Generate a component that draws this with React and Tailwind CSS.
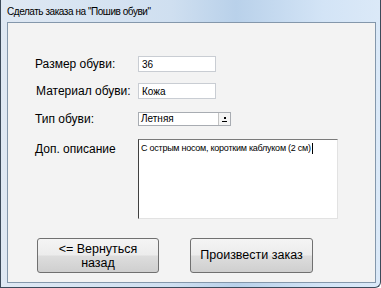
export default function App() {
  return (
    <div
      className="w-[381px] h-[288px] flex flex-col border-x border-b border-[#3c4a5a] rounded-br-[6px] bg-[linear-gradient(90deg,#dfe8f3_0%,#cfdff0_45%,#b9d1ea_62%,#d3e4f6_85%,#dbe9f8_100%)]"
      style={{ fontFamily: '"Liberation Sans", Arial, sans-serif' }}
    >
      {/* Title bar */}
      <div className="h-[22px] flex items-center pl-[6px] text-[10px] tracking-[-0.45px] whitespace-nowrap text-black">
        Сделать заказа на "Пошив обуви"
      </div>

      {/* Client area */}
      <div className="flex-1 ml-[6px] mr-[4px] mb-[4px] border border-[#8497ab] bg-[#f3f3f3] flex flex-col text-black whitespace-nowrap">
        <div className="flex items-center h-[16px] mt-[33px] pl-[27px]">
          <span className="w-[103px] text-[12px]">Размер обуви:</span>
          <div className="w-[78px] h-[16px] bg-white border border-[#c9cdd3] text-[10px] pl-[3px] flex items-center">36</div>
        </div>

        <div className="flex items-center h-[16px] mt-[11px] pl-[28px]">
          <span className="w-[102px] text-[12px]">Материал обуви:</span>
          <div className="w-[78px] h-[16px] bg-white border border-[#c9cdd3] text-[10px] pl-[3px] flex items-center">Кожа</div>
        </div>

        <div className="flex items-center h-[14px] mt-[13px] pl-[27px]">
          <span className="w-[103px] text-[12px]">Тип обуви:</span>
          <div className="w-[93px] h-[14px] bg-white border border-[#a8acb2] flex items-stretch">
            <span className="flex-1 text-[10px] pl-[2px] leading-[12px]">Летняя</span>
            <div className="w-[12px] border-l border-[#c4c4c4] bg-[#f4f4f4] flex flex-col items-center justify-center gap-[2px]">
              <div className="w-[2px] h-[2px] bg-black" />
              <div className="w-[5px] h-[1px] bg-black" />
            </div>
          </div>
        </div>

        <div className="flex items-start mt-[13px] pl-[27px]">
          <span className="w-[103px] text-[12px] pt-[1px]">Доп. описание</span>
          <div className="w-[200px] h-[80px] bg-white border-t border-l border-t-[#7a7a7a] border-l-[#404040] border-r border-b border-r-[#e2e2e2] border-b-[#e2e2e2] text-[9px] pl-[2px] pt-[3px] flex items-start">
            <span className="leading-[11px] tracking-[-0.25px]">С острым носом, коротким каблуком (2 см)</span>
            <span className="w-[1px] h-[11px] bg-black ml-[1px]" />
          </div>
        </div>

        <div className="flex mt-[19px] pl-[29px] gap-[31px]">
          <button className="w-[122px] h-[35px] rounded-[3px] border border-[#707070] bg-[linear-gradient(180deg,#f4f4f4_0%,#ececec_48%,#dddddd_52%,#cfcfcf_100%)] text-[12.5px] leading-[14px] text-black">
            {"<= Вернуться"}
            <br />
            назад
          </button>
          <button className="w-[123px] h-[35px] rounded-[3px] border border-[#707070] bg-[linear-gradient(180deg,#f4f4f4_0%,#ececec_48%,#dddddd_52%,#cfcfcf_100%)] text-[12.5px] text-black">
            Произвести заказ
          </button>
        </div>
      </div>
    </div>
  );
}
